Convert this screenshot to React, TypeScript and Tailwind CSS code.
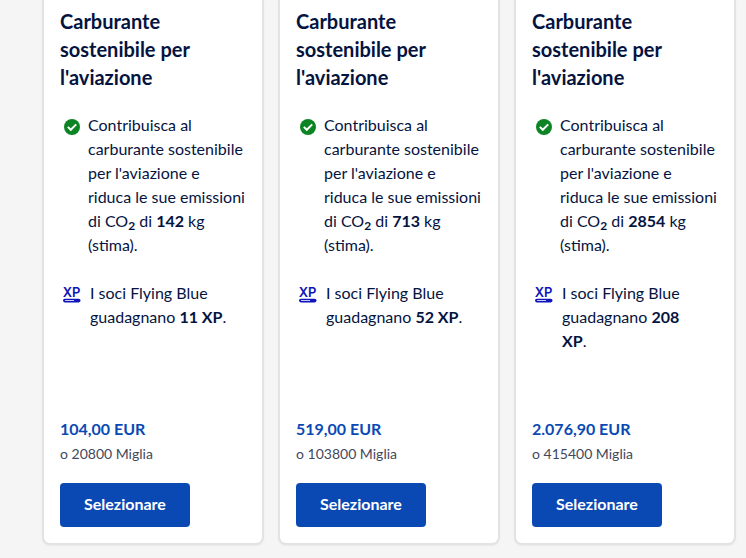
interface Offer {
  id: string;
  kg: string;
  xp: string;
  price: string;
  miles: string;
}

const offers: Offer[] = [
  { id: "small", kg: "142", xp: "11", price: "104,00 EUR", miles: "20800" },
  { id: "medium", kg: "713", xp: "52", price: "519,00 EUR", miles: "103800" },
  { id: "large", kg: "2854", xp: "208", price: "2.076,90 EUR", miles: "415400" },
];

function CheckIcon() {
  return (
    <svg
      viewBox="0 0 16 16"
      className="mt-[6px] ml-1 size-4 shrink-0"
      aria-hidden="true"
    >
      <circle cx="8" cy="8" r="8" fill="#0d8424" />
      <path
        d="M3.8 7.9 6.8 10.8 12.2 5.4"
        fill="none"
        stroke="#fff"
        strokeWidth="2"
      />
    </svg>
  );
}

function XpIcon() {
  return (
    <svg
      viewBox="0 0 18 20"
      className="mt-[3px] ml-[3px] h-5 w-[18px] shrink-0 overflow-visible"
      aria-hidden="true"
    >
      <text
        x="8.5"
        y="12.5"
        textAnchor="middle"
        fontFamily="Inter, sans-serif"
        fontSize="13"
        fontWeight="600"
        fill="#0f15b8"
      >
        XP
      </text>
      <rect x="0" y="14.8" width="17.5" height="3.6" rx="1.8" fill="#0f15b8" />
      <path d="M2 16.5h9" stroke="#c9cbf2" strokeWidth="1" />
    </svg>
  );
}

function OfferCard({ offer }: { offer: Offer }) {
  return (
    <article className="flex flex-col rounded-b-lg border-x-2 border-b-2 border-[#e3e3e3] bg-white px-4 pt-[7px] pb-4 shadow-xs">
      <h2 className="text-[20px] leading-7 font-bold">
        Carburante sostenibile per l'aviazione
      </h2>

      <ul className="mt-[22px] mb-16 flex flex-col gap-6 text-base leading-6">
        <li className="-mr-2 flex gap-2">
          <CheckIcon />
          <p>
            Contribuisca al carburante sostenibile per l'aviazione e
            <br />
            riduca le sue emissioni di CO
            <sub className="text-xs font-bold">2</sub> di{" "}
            <strong>{offer.kg}</strong> kg (stima).
          </p>
        </li>
        <li className="flex gap-[9px] pr-4">
          <XpIcon />
          <p>
            I soci Flying Blue guadagnano <strong>{offer.xp} XP</strong>.
          </p>
        </li>
      </ul>

      <div className="mt-auto">
        <p className="text-base leading-6 font-bold text-[#0a49b4]">
          {offer.price}
        </p>
        <p className="mt-px text-sm leading-6 text-[#43485c]">
          o {offer.miles} Miglia
        </p>
        <button
          type="button"
          className="mt-[17px] h-11 rounded-sm bg-[#0a49b4] px-6 pb-0.5 text-base font-bold text-white"
        >
          Selezionare
        </button>
      </div>
    </article>
  );
}

export default function App() {
  return (
    <main className="min-h-screen bg-[#f5f5f5] pr-[10px] pb-[13px] pl-[42px] font-['Lato',sans-serif] text-[#05143f]">
      <div className="grid grid-cols-3 gap-[14px]">
        {offers.map((offer) => (
          <OfferCard key={offer.id} offer={offer} />
        ))}
      </div>
    </main>
  );
}
